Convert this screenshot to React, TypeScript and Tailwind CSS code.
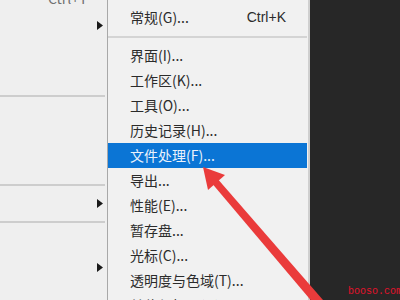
const font = { fontFamily: '"Microsoft YaHei", "Noto Sans CJK SC", "Liberation Sans", sans-serif' };

function SubArrow() {
  return (
    <svg width="6" height="9" viewBox="0 0 6 9" className="block">
      <path d="M0 0 L6 4.5 L0 9 Z" fill="#1a1a1a" />
    </svg>
  );
}

function Sep() {
  return <div className="h-[2px] shrink-0 bg-[#cdcdcd] mr-[2px]" />;
}

const items = [
  '界面(I)...',
  '工作区(K)...',
  '工具(O)...',
  '历史记录(H)...',
  '文件处理(F)...',
  '导出...',
  '性能(E)...',
  '暂存盘...',
  '光标(C)...',
  '透明度与色域(T)...',
  '单位与标尺(U)...',
];

export default function App() {
  return (
    <div
      className="relative w-[400px] h-[300px] overflow-hidden flex bg-[#272727] text-[14px] text-[#2b2b2b]"
      style={font}
    >
      {/* parent menu (labels cut off to the left) */}
      <div className="w-[108px] shrink-0 bg-[#efefef] border-r border-[#a8a8a8] flex flex-col">
        <div className="h-[12px] shrink-0">
          <div className="-mt-[12px] pl-[48px] leading-[20px] text-[#707070]">Ctrl+T</div>
        </div>
        <div className="h-[26px] shrink-0 flex items-center justify-end pr-[4px]">
          <SubArrow />
        </div>
        <div className="h-[57px] shrink-0" />
        <Sep />
        <div className="h-[87px] shrink-0" />
        <Sep />
        <div className="h-[35px] shrink-0 flex items-center justify-end pr-[4px]">
          <SubArrow />
        </div>
        <Sep />
        <div className="h-[88px] shrink-0 flex items-center justify-end pr-[4px]">
          <SubArrow />
        </div>
      </div>

      {/* preferences submenu */}
      <div className="w-[202px] shrink-0 bg-[#f1f1f1] border-r-2 border-[#cfcfcf] pr-[1px] pt-[5px] flex flex-col">
        <div className="h-[25px] shrink-0 flex items-center justify-between pl-[22px] pr-[21px]">
          <span>常规(G)...</span>
          <span style={{ fontFamily: '"Liberation Sans", sans-serif' }}>Ctrl+K</span>
        </div>
        <div className="h-[13px] shrink-0 flex items-center">
          <div className="h-[2px] w-full bg-[#d4d4d4]" />
        </div>
        {items.map((label, i) => (
          <div
            key={label}
            className={
              i === 4
                ? 'h-[25px] shrink-0 flex items-center pl-[22px] bg-[#0b75d5] text-[#eaf2fb]'
                : 'h-[25px] shrink-0 flex items-center pl-[22px]'
            }
          >
            {label}
          </div>
        ))}
      </div>

      <div className="flex-1 bg-[#272727]" />

      {/* red annotation arrow */}
      <svg className="absolute left-0 top-0 pointer-events-none" width="400" height="300" viewBox="0 0 400 300">
        <polygon points="210,181 216,177 323,300 314,304" fill="#ea3b3b" />
        <polygon points="203,167 225,175 208,190" fill="#ea3b3b" />
      </svg>

      <div
        className="absolute left-[348px] top-[286px] text-[10px] leading-[12px] text-[#e3122b] whitespace-nowrap"
        style={{ fontFamily: '"Liberation Mono", monospace' }}
      >
        booso.com
      </div>
    </div>
  );
}
